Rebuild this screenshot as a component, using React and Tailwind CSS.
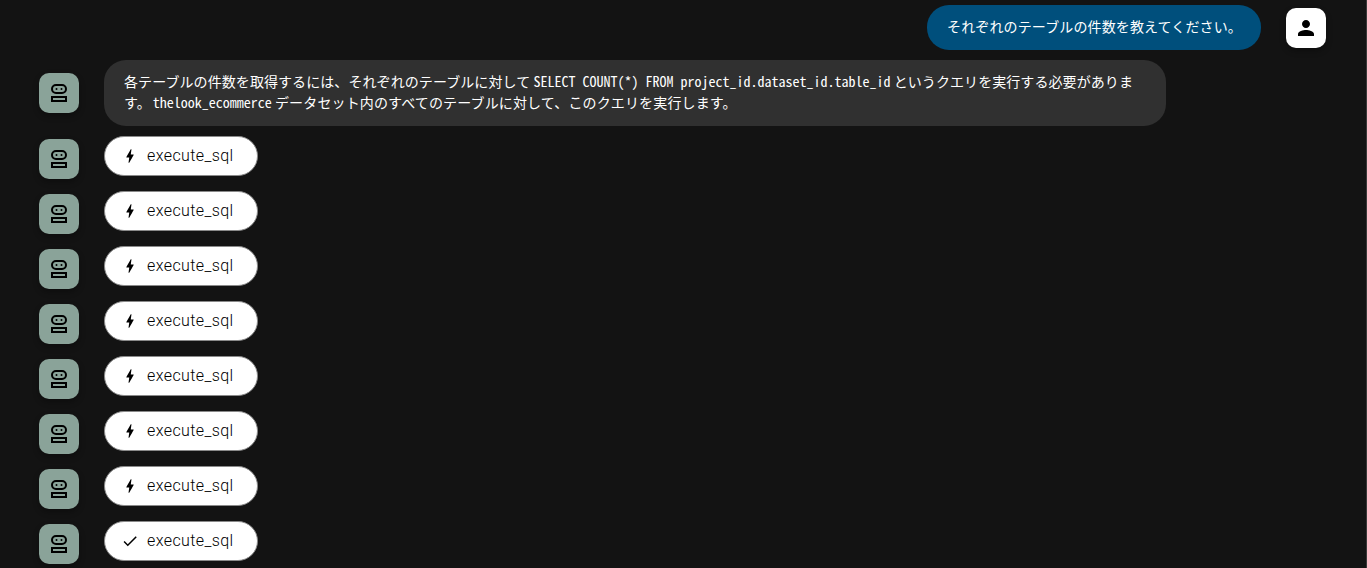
const sans = "font-['Noto_Sans_CJK_JP',sans-serif]"

const BotAvatar = () => (
    <div className="w-10 h-10 rounded-[10px] bg-[#8aa399] flex items-center justify-center shrink-0 shadow-[0_3px_6px_rgba(0,0,0,0.3)]">
        <svg width="24" height="24" viewBox="0 0 24 24" fill="none" stroke="#000" strokeWidth="2">
            <rect x="5" y="4" width="14" height="8" rx="4" />
            <rect x="5" y="16" width="14" height="4" />
            <circle cx="9.5" cy="8" r="1" fill="#000" stroke="none" />
            <circle cx="14.5" cy="8" r="1" fill="#000" stroke="none" />
        </svg>
    </div>
)

const UserAvatar = () => (
    <div className="w-10 h-10 rounded-[10px] bg-white flex items-center justify-center shrink-0 shadow-[0_3px_6px_rgba(0,0,0,0.3)]">
        <svg width="24" height="24" viewBox="0 0 24 24" fill="#000">
            <path d="M12 12c2.21 0 4-1.79 4-4s-1.79-4-4-4-4 1.79-4 4 1.79 4 4 4zm0 2c-2.67 0-8 1.34-8 4v2h16v-2c0-2.66-5.33-4-8-4z" />
        </svg>
    </div>
)

const Code = ({ children }) => (
    <span className="tracking-normal font-['Noto_Sans_Mono_CJK_JP','Liberation_Mono',monospace]">{children}</span>
)

const ToolRow = ({ done }) => (
    <div className="flex items-center gap-[25px] pl-[39px] h-[40px]">
        <div className="mt-[6px]">
            <BotAvatar />
        </div>
        <div className="w-[154px] h-[40px] rounded-[20px] bg-white border border-[#8a8a8a] flex items-center pl-[16px] text-black">
            {done ? (
                <svg viewBox="0 0 24 24" fill="#000" className="w-[18px] h-[18px] shrink-0">
                    <path d="M9 16.17 4.83 12l-1.42 1.41L9 19 21 7l-1.41-1.41z" />
                </svg>
            ) : (
                <svg viewBox="0 0 24 24" fill="#000" className="w-[18px] h-[18px] shrink-0">
                    <path d="M11 21h-1l1-7H7.5c-.58 0-.57-.32-.38-.66.19-.34.05-.08.07-.12C8.48 10.94 10.42 7.54 13 3h1l-1 7h3.5c.49 0 .56.33.47.51l-.07.15C12.96 17.55 11 21 11 21z" />
                </svg>
            )}
            <span className="ml-[8px] text-base font-light tracking-[0.4px] font-['Roboto',sans-serif]">execute_sql</span>
        </div>
    </div>
)

const App = () => {
    return (
        <div className={`w-full h-[568px] overflow-hidden bg-[#131313] border-r border-[#3a3a3a] text-white ${sans}`}>
            <div className="flex justify-end items-center gap-[25px] pt-[5px] pr-[40px]">
                <div className="w-[334px] h-[45px] rounded-[22px] bg-[#004f7c] flex items-center pl-[20px] pb-[4px] text-sm tracking-[0.14px]">
                    それぞれのテーブルの件数を教えてください。
                </div>
                <UserAvatar />
            </div>

            <div className="flex items-center gap-[25px] pl-[39px] mt-[10px]">
                <BotAvatar />
                <div className="w-[1062px] h-[66px] rounded-[22px] bg-[#303030] px-[20px] pt-[11px] text-sm leading-[21px] tracking-[0.08px]">
                    各テーブルの件数を取得するには、それぞれのテーブルに対して <Code>SELECT COUNT(*) FROM project_id.dataset_id.table_id</Code> というクエリを実行する必要がありま<br />す。<span className="ml-[2px]"><Code>thelook_ecommerce</Code></span> <span className="tracking-[0.14px]">データセット内のすべてのテーブルに対して、このクエリを実行します。</span>
                </div>
            </div>

            <div className="flex flex-col gap-[15px] mt-[10px]">
                <ToolRow />
                <ToolRow />
                <ToolRow />
                <ToolRow />
                <ToolRow />
                <ToolRow />
                <ToolRow />
                <ToolRow done />
            </div>
        </div>
    )
}

export default App
